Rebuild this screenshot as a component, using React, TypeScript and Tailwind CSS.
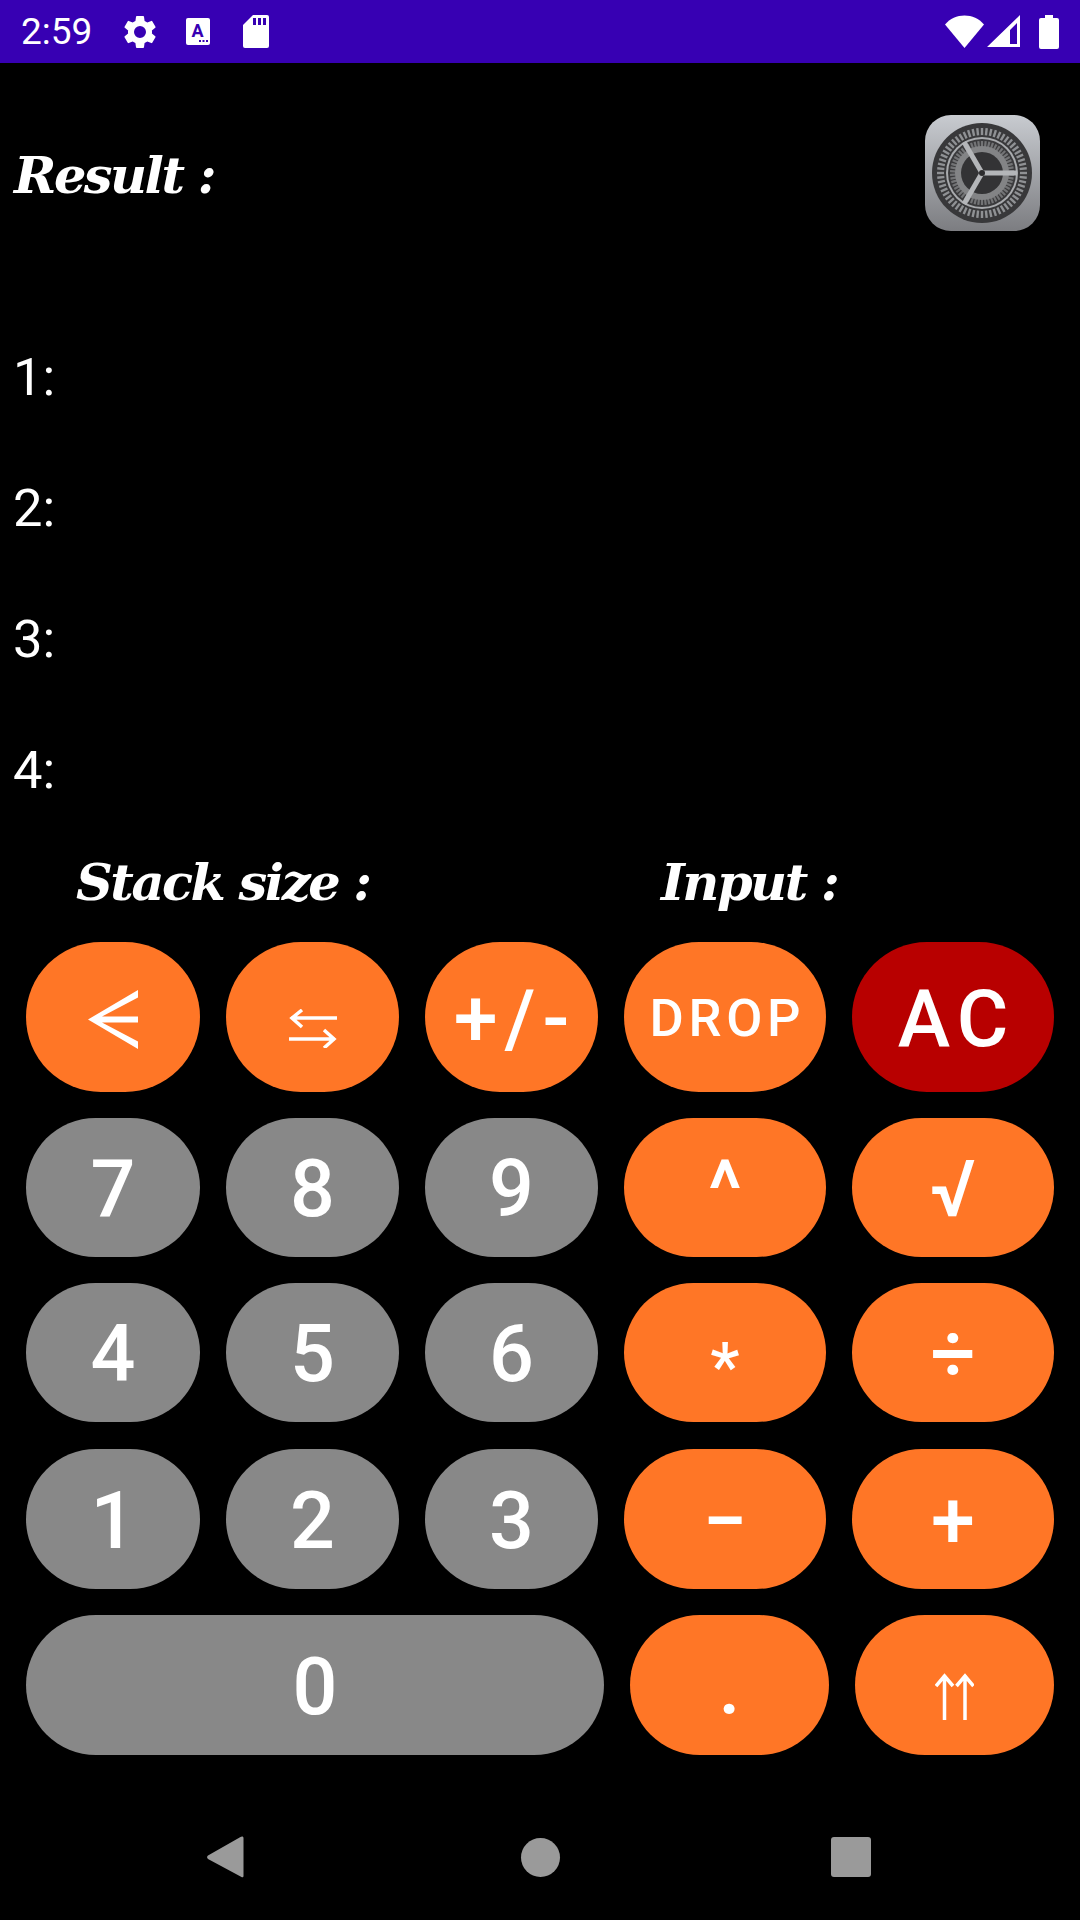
const sans = "font-['Roboto',sans-serif]";
const serifLabel = "font-['DejaVu_Serif',serif] text-[51px] font-bold italic leading-none tracking-[-2.5px] text-white";
const orange = "bg-[#ff7626]";
const gray = "bg-[#888888]";

function StatusBar() {
  return (
    <div className="flex h-[63px] items-center justify-between bg-[#3700b3] pl-[21px] pr-[21px] text-white">
      <div className="flex items-center">
        <span className={`${sans} text-[37px] leading-none`}>2:59</span>
        <svg className="ml-[28px]" width="40" height="40" viewBox="0 0 24 24" fill="#fff">
          <path d="M19.14 12.94c.04-.3.06-.61.06-.94 0-.32-.02-.64-.07-.94l2.03-1.58a.49.49 0 0 0 .12-.61l-1.92-3.32a.49.49 0 0 0-.59-.22l-2.39.96c-.5-.38-1.03-.7-1.62-.94l-.36-2.54a.48.48 0 0 0-.48-.41h-3.84a.48.48 0 0 0-.47.41l-.36 2.54c-.59.24-1.13.57-1.62.94l-2.39-.96a.48.48 0 0 0-.59.22L2.74 8.87a.47.47 0 0 0 .12.61l2.03 1.58c-.05.3-.09.63-.09.94s.02.64.07.94l-2.03 1.58a.49.49 0 0 0-.12.61l1.92 3.32c.12.22.37.29.59.22l2.39-.96c.5.38 1.03.7 1.62.94l.36 2.54c.05.24.24.41.48.41h3.84c.24 0 .44-.17.47-.41l.36-2.54c.59-.24 1.13-.56 1.62-.94l2.39.96c.22.08.47 0 .59-.22l1.92-3.32a.47.47 0 0 0-.12-.61l-2.01-1.58zM12 15.6a3.6 3.6 0 1 1 0-7.2 3.6 3.6 0 0 1 0 7.2z" />
        </svg>
        <svg className="ml-[26px]" width="24" height="27" viewBox="0 0 24 27">
          <rect width="24" height="27" rx="2" fill="#fff" />
          <text x="11.5" y="19" fontSize="18" fontWeight="700" fill="#3700b3" textAnchor="middle" fontFamily="Roboto, sans-serif">A</text>
          <rect x="13" y="22" width="2" height="2" fill="#3700b3" />
          <rect x="16.500" y="22" width="2" height="2" fill="#3700b3" />
          <rect x="20" y="22" width="2" height="2" fill="#3700b3" />
        </svg>
        <svg className="ml-[33px]" width="26" height="33" viewBox="0 0 26 33">
          <path d="M10 0h14a2 2 0 0 1 2 2v29a2 2 0 0 1-2 2H2a2 2 0 0 1-2-2V10z" fill="#fff" />
          <rect x="10" y="3" width="3" height="7" fill="#3700b3" />
          <rect x="15" y="3" width="3" height="7" fill="#3700b3" />
          <rect x="20" y="3" width="3" height="7" fill="#3700b3" />
        </svg>
      </div>
      <div className="flex items-center">
        <svg width="39" height="33" viewBox="0 0 39 33">
          <path d="M0 9.500C5 3.500 12 0.500 19.500 0.500S34 3.500 39 9.500L19.500 33z" fill="#fff" />
        </svg>
        <svg className="ml-[3px]" width="33" height="33" viewBox="0 0 33 33">
          <path fillRule="evenodd" d="M33 0v32H0zM23 15v14h7V8z" fill="#fff" />
        </svg>
        <svg className="ml-[19px]" width="20" height="34" viewBox="0 0 20 34">
          <path d="M6 0h8v3h4a2 2 0 0 1 2 2v27a2 2 0 0 1-2 2H2a2 2 0 0 1-2-2V5a2 2 0 0 1 2-2h4z" fill="#fff" />
        </svg>
      </div>
    </div>
  );
}

function SettingsIcon() {
  const teeth = Array.from({ length: 60 }, (_, i) => i * 6);
  const inner = Array.from({ length: 54 }, (_, i) => i * (360 / 54));
  return (
    <svg width="115" height="116" viewBox="0 0 115 116">
      <defs>
        <linearGradient id="tile" x1="0" y1="0" x2="0" y2="1">
          <stop offset="0" stopColor="#c8cbd0" />
          <stop offset="1" stopColor="#7c7d81" />
        </linearGradient>
      </defs>
      <rect width="115" height="116" rx="26" fill="url(#tile)" />
      <circle cx="57" cy="58" r="50" fill="#38383a" />
      <g stroke="#8f9194" strokeWidth="2.400">
        {teeth.map((a) => (
          <line key={a} x1="57" y1="13" x2="57" y2="21" transform={`rotate(${a} 57 58)`} />
        ))}
      </g>
      <circle cx="57" cy="58" r="38" fill="#38383a" />
      <circle cx="57" cy="58" r="36" fill="#a8aaad" />
      <circle cx="57" cy="58" r="34" fill="#3a3a3c" />
      <g stroke="#737476" strokeWidth="2.200">
        {inner.map((a) => (
          <line key={a} x1="57" y1="26" x2="57" y2="33" transform={`rotate(${a} 57 58)`} />
        ))}
      </g>
      <circle cx="57" cy="58" r="27" fill="#838486" />
      <circle cx="57" cy="58" r="21" fill="#333335" />
      <g stroke="#b4b6b9" strokeWidth="5">
        <line x1="57" y1="58" x2="92" y2="58" />
        <line x1="57" y1="58" x2="39" y2="27" />
        <line x1="57" y1="58" x2="39" y2="89" />
      </g>
      <circle cx="57" cy="58" r="3" fill="#2c2c2e" />
    </svg>
  );
}

function BackGlyph() {
  return (
    <svg className="mt-[4px]" width="50" height="59" viewBox="0 0 50 59" fill="#fff">
      <path d="M50 0v7.500L14 26.500h36v6H14l36 19V59L0 29.500z" />
    </svg>
  );
}

function SwapGlyph() {
  return (
    <svg className="mt-[22px]" width="48" height="39" viewBox="0 0 48 39" fill="none" stroke="#fff" strokeWidth="3.500">
      <path d="M2 9h46M13 1 3 9l10 9" />
      <path d="M0 30h46M35 21l10 9-10 9" />
    </svg>
  );
}

function UpUpGlyph() {
  return (
    <svg className="mt-[23px]" width="39" height="47" viewBox="0 0 39 47" fill="none" stroke="#fff" strokeWidth="3.500">
      <path d="M9.500 47V2M1 13l8.500-10L18 13" />
      <path d="M30 47V2M21.500 13 30 3l8.500 10" />
    </svg>
  );
}

function Key({ label, className, text }: { label: React.ReactNode; className: string; text?: string }) {
  return (
    <div className={`flex items-center justify-center rounded-full text-white ${sans} font-medium ${className} ${text ?? "pl-[0.09em] pt-[4px] text-[79px] tracking-[0.09em]"}`}>
      {label}
    </div>
  );
}

const colA = "w-[174px]";
const colB = "w-[173px]";
const colC = "w-[173px]";
const colD = "w-[202px]";

function DigitRow({ keys, ops, rowH, opText }: { keys: string[]; ops: [string, string]; rowH: string; opText?: string }) {
  return (
    <div className={`flex ${rowH}`}>
      <Key label={keys[0]} className={`${colA} ${gray}`} />
      <Key label={keys[1]} className={`${colB} ml-[26px] ${gray}`} />
      <Key label={keys[2]} className={`${colC} ml-[26px] ${gray}`} />
      <Key label={ops[0]} className={`${colD} ml-[26px] ${orange}`} text={opText} />
      <Key label={ops[1]} className={`${colD} ml-[26px] ${orange}`} />
    </div>
  );
}

export default function App() {
  return (
    <div className="flex h-[1920px] w-[1080px] flex-col bg-black">
      <StatusBar />

      <div className="flex items-start justify-between pl-[14px] pr-[40px] pt-[52px]">
        <div className={`pt-[35px] ${serifLabel}`}>Result :</div>
        <SettingsIcon />
      </div>

      <div className={`mt-[118px] flex flex-col gap-[75px] pl-[13px] ${sans} text-[52.5px] leading-[56px] text-white`}>
        <div>1:</div>
        <div>2:</div>
        <div>3:</div>
        <div>4:</div>
      </div>

      <div className={`mt-[59px] flex ${serifLabel}`}>
        <div className="ml-[76px] w-[585px]">Stack size :</div>
        <div>Input :</div>
      </div>

      <div className="mt-[34px] flex flex-col pl-[26px]">
        <div className="flex h-[150px]">
          <Key label={<BackGlyph />} className={`${colA} ${orange}`} text="" />
          <Key label={<SwapGlyph />} className={`${colB} ml-[26px] ${orange}`} text="" />
          <Key label="+/-" className={`${colC} ml-[26px] ${orange}`} />
          <Key label="DROP" className={`${colD} ml-[26px] ${orange}`} text="pl-[0.09em] pt-[2px] text-[52.5px] tracking-[0.09em]" />
          <Key label="AC" className={`${colD} ml-[26px] bg-[#b80000]`} />
        </div>
        <div className="mt-[26px] flex flex-col gap-[26px]">
          <DigitRow keys={["7", "8", "9"]} ops={["^", "√"]} rowH="h-[139px]" />
          <DigitRow keys={["4", "5", "6"]} ops={["*", "÷"]} rowH="h-[139px]" opText="pl-[0.09em] pt-[30px] text-[66px] tracking-[0.09em]" />
        </div>
        <div className="mt-[27px] flex flex-col gap-[26px]">
          <DigitRow keys={["1", "2", "3"]} ops={["−", "+"]} rowH="h-[140px]" />
          <div className="flex h-[140px]">
            <Key label="0" className={`w-[578px] ${gray}`} />
            <Key label="." className={`ml-[26px] w-[199px] ${orange}`} />
            <Key label={<UpUpGlyph />} className={`ml-[26px] w-[199px] ${orange}`} text="" />
          </div>
        </div>
      </div>

      <div className="mt-auto flex h-[126px] items-center">
        <svg className="ml-[206px]" width="38" height="44" viewBox="0 0 38 44">
          <path d="M36 1.500c1 0 1.500.6 1.500 1.500v38c0 1-1 1.800-2 1L2 24c-1.200-1-1.200-2.400 0-3.400L34.500 2z" fill="#9a9a9a" />
        </svg>
        <div className="ml-[277px] h-[39px] w-[39px] rounded-full bg-[#9a9a9a]" />
        <div className="ml-[271px] h-[40px] w-[40px] rounded-[3px] bg-[#9a9a9a]" />
      </div>
    </div>
  );
}
